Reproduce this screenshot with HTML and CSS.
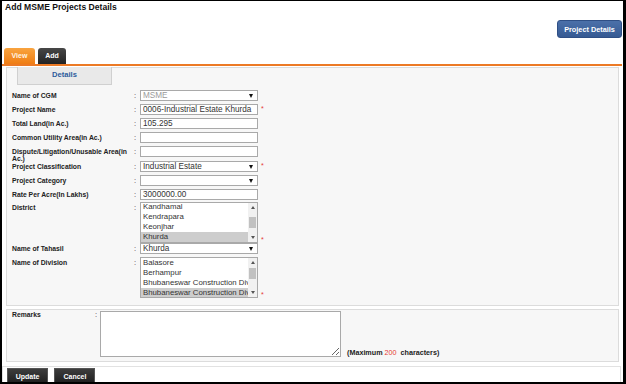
FILE: index.html
```html
<!DOCTYPE html>
<html lang="en">
<head>
  <meta charset="UTF-8" />
  <meta name="viewport" content="width=device-width, initial-scale=1.0"/>
  <title>Add MSME Projects Details</title>
  <link rel="stylesheet" href="styles.css">
</head>
<body>

  <div class="page">
    <div class="header">
      <h1 class="title">Add MSME Projects Details</h1>
      <button class="btn-blue" type="button">Project Details</button>
    </div>

    <!-- Tabs -->
    <div class="tabs">
      <div class="tab tab-view">View</div>
      <div class="tab tab-add">Add</div>
    </div>

    <!-- Details Form -->
    <div class="panel">
      <div class="subtab">Details</div>
      <div class="form">
        <div class="row">
          <label class="lbl">Name of CGM</label><span class="colon">:</span>
          <div class="field select disabled"><span>MSME</span><i class="caret"></i></div>
        </div>
        <div class="row">
          <label class="lbl">Project Name</label><span class="colon">:</span>
          <input class="field" type="text" value="0006-Industrial Estate Khurda"><span class="req">*</span>
        </div>
        <div class="row">
          <label class="lbl">Total Land(in Ac.)</label><span class="colon">:</span>
          <input class="field" type="text" value="105.295">
        </div>
        <div class="row">
          <label class="lbl">Common Utility Area(in Ac.)</label><span class="colon">:</span>
          <input class="field" type="text" value="">
        </div>
        <div class="row row-wrap">
          <label class="lbl">Dispute/Litigation/Unusable Area(in Ac.)</label><span class="colon">:</span>
          <input class="field" type="text" value="">
        </div>
        <div class="row">
          <label class="lbl">Project Classification</label><span class="colon">:</span>
          <div class="field select"><span>Industrial Estate</span><i class="caret"></i></div><span class="req">*</span>
        </div>
        <div class="row">
          <label class="lbl">Project Category</label><span class="colon">:</span>
          <div class="field select"><span></span><i class="caret"></i></div>
        </div>
        <div class="row row-short">
          <label class="lbl">Rate Per Acre(In Lakhs)</label><span class="colon">:</span>
          <input class="field" type="text" value="3000000.00">
        </div>
        <div class="row list-row">
          <label class="lbl">District</label><span class="colon">:</span>
          <div class="listbox">
            <div class="options" style="margin-top: -1px">
              <div class="opt">Kandhamal</div>
              <div class="opt">Kendrapara</div>
              <div class="opt">Keonjhar</div>
              <div class="opt sel">Khurda</div>
            </div>
            <div class="sb">
              <div class="sb-btn"><i class="tri-up"></i></div>
              <div class="sb-track"><div class="sb-thumb" style="margin-top: 5px"></div></div>
              <div class="sb-btn"><i class="tri-down"></i></div>
            </div>
          </div>
          <span class="req req-list">*</span>
        </div>
        <div class="row">
          <label class="lbl">Name of Tahasil</label><span class="colon">:</span>
          <div class="field select"><span>Khurda</span><i class="caret"></i></div>
        </div>
        <div class="row list-row">
          <label class="lbl">Name of Division</label><span class="colon">:</span>
          <div class="listbox">
            <div class="options">
              <div class="opt">Balasore</div>
              <div class="opt">Berhampur</div>
              <div class="opt">Bhubaneswar Construction Division</div>
              <div class="opt sel">Bhubaneswar Construction Division</div>
            </div>
            <div class="sb">
              <div class="sb-btn"><i class="tri-up"></i></div>
              <div class="sb-track"><div class="sb-thumb" style="margin-top: 1px"></div></div>
              <div class="sb-btn"><i class="tri-down"></i></div>
            </div>
          </div>
          <span class="req req-list">*</span>
        </div>
      </div>
    </div>

    <!-- Remarks -->
    <div class="panel remarks">
      <label class="lbl rem-lbl">Remarks</label><span class="colon rem-colon">:</span>
      <textarea class="rem-text"></textarea>
      <span class="note">(Maximum <span class="count">200</span> &nbsp;characters)</span>
    </div>

    <div class="footer">
      <button class="btn-dark" type="button">Update</button>
      <button class="btn-dark" type="button">Cancel</button>
    </div>
  </div>

</body>
</html>
```

FILE: styles.css
```css
body {
  margin: 0;
  font-family: "Liberation Sans", Arial, sans-serif;
  background: #fff;
}

.page {
  height: 384px;
  box-sizing: border-box;
  border: solid #000;
  border-width: 1px 3px 2px 2px;
  overflow: hidden;
  background: #fff;
}

.header {
  display: flex;
  justify-content: space-between;
  align-items: flex-start;
  height: 46px;
}

.title {
  margin: 0;
  padding-left: 3px;
  font-size: 8.6px;
  line-height: 12px;
  font-weight: bold;
  color: #111;
}

.btn-blue {
  margin: 19px 1px 0 0;
  width: 65px;
  height: 18px;
  padding: 0;
  border: 1px solid #2f4f85;
  border-radius: 3px;
  background: linear-gradient(#4b70a9, #365a93);
  color: #fff;
  font: bold 7.3px "Liberation Sans", Arial, sans-serif;
}

.tabs {
  display: flex;
  gap: 3px;
  padding-left: 2px;
  height: 17px;
  margin-right: 1px;
  border-bottom: 2px solid #ec7a25;
}

.tab {
  height: 16px;
  margin-top: 1px;
  border-radius: 3px 3px 0 0;
  font-size: 7px;
  font-weight: bold;
  line-height: 16px;
  text-align: center;
  color: #fff;
}

.tab-view {
  width: 31px;
  background: linear-gradient(#f9a43f, #ef7d14);
  color: #fff4e4;
}

.tab-add {
  width: 28px;
  background: linear-gradient(#474747, #232323);
}

.panel {
  margin: 1px 4px 0;
  border: 1px solid #dcdcdc;
  background: #f7f7f7;
}

.subtab {
  margin: -1px 0 0 10px;
  width: 95px;
  height: 18px;
  box-sizing: border-box;
  border: 1px solid #d0d0d0;
  border-top: 0;
  background: #e9e9e9;
  color: #2e5c9c;
  font-size: 7.6px;
  font-weight: bold;
  line-height: 16px;
  text-align: center;
}

.form {
  padding: 5px 0 7px 5px;
}

.row {
  display: flex;
  align-items: flex-start;
  height: 14px;
}

.row.row-wrap {
  height: 15px;
}

.row.row-short {
  height: 13px;
}

.row.list-row {
  height: 41px;
}

.lbl {
  width: 122px;
  flex-shrink: 0;
  padding-top: 1.5px;
  font-size: 6.8px;
  font-weight: bold;
  line-height: 7.5px;
  color: #222;
}

.colon {
  width: 6px;
  flex-shrink: 0;
  font-size: 7.5px;
  line-height: 11px;
  color: #333;
}

.field {
  width: 118px;
  height: 11px;
  box-sizing: border-box;
  margin: 0;
  padding: 0 2px;
  border: 1px solid #a9a9a9;
  background: #fff;
  font: 8.2px "Liberation Sans", Arial, sans-serif;
  color: #333;
  outline: none;
}

.select {
  display: flex;
  align-items: center;
  justify-content: space-between;
  line-height: 9px;
}

.disabled {
  color: #9a9a9a;
}

.caret {
  border-left: 2.5px solid transparent;
  border-right: 2.5px solid transparent;
  border-top: 4px solid #111;
  margin-right: 2px;
}

.req {
  margin-left: 3px;
  font-size: 7px;
  line-height: 9px;
  color: #e53935;
}

.req-list {
  align-self: flex-end;
  line-height: 6px;
}

.listbox {
  display: flex;
  width: 118px;
  height: 41px;
  box-sizing: border-box;
  border: 1px solid #a9a9a9;
  background: #fff;
  overflow: hidden;
}

.options {
  flex: 1;
  min-width: 0;
}

.opt {
  height: 10px;
  padding-left: 2px;
  font-size: 7.8px;
  line-height: 10px;
  white-space: nowrap;
  overflow: hidden;
  color: #333;
}

.opt.sel {
  background: #cdcdcd;
}

.sb {
  display: flex;
  flex-direction: column;
  width: 9px;
  flex-shrink: 0;
  background: #f1f1f1;
}

.sb-btn {
  height: 9px;
  display: flex;
  align-items: center;
  justify-content: center;
}

.tri-up {
  border-left: 2px solid transparent;
  border-right: 2px solid transparent;
  border-bottom: 3px solid #555;
}

.tri-down {
  border-left: 2px solid transparent;
  border-right: 2px solid transparent;
  border-top: 3px solid #555;
}

.sb-track {
  flex: 1;
}

.sb-thumb {
  height: 11px;
  margin: 0 1px;
  background: #c1c1c1;
}

.remarks {
  display: flex;
  align-items: flex-start;
  margin-top: 3px;
  padding: 1px 0 4px 5px;
}

.rem-lbl {
  width: 83px;
  padding-top: 0;
}

.rem-colon {
  width: 5px;
  line-height: 8px;
}

.rem-text {
  width: 241px;
  height: 46px;
  box-sizing: border-box;
  margin: 0;
  border: 1px solid #a9a9a9;
  background: #fff;
  resize: both;
}

.note {
  align-self: flex-end;
  margin-left: 6px;
  font-size: 7.2px;
  font-weight: bold;
  line-height: 8px;
  color: #222;
}

.note .count {
  color: #e53935;
  font-weight: normal;
}

.footer {
  margin: 4px 2px 0 0;
  padding: 1px 0 0 4px;
  height: 20px;
  border: 1px solid #e2e2e2;
  background: #fff;
}

.btn-dark {
  width: 41px;
  height: 16px;
  margin: 0 2px 0 0;
  padding: 0;
  border: 1px solid #555;
  background: linear-gradient(#3d3d3d, #1f1f1f);
  color: #fff;
  font: bold 7px "Liberation Sans", Arial, sans-serif;
  vertical-align: top;
}
```
